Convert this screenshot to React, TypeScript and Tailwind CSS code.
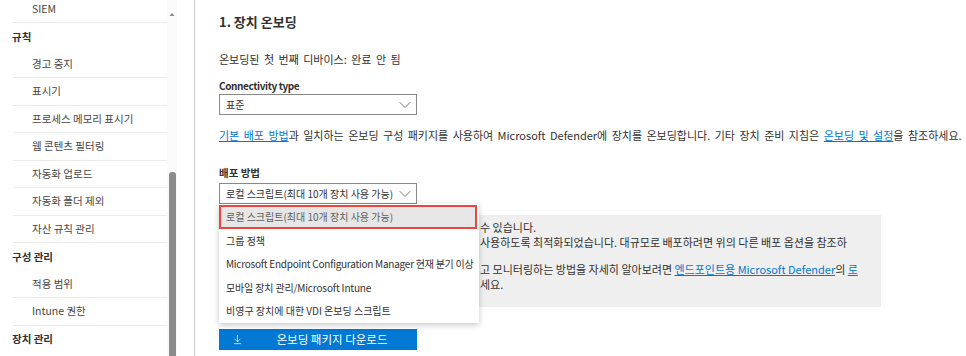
import { ChevronDown, ArrowDownToLine } from 'lucide-react';

type NavRow = { label: string; head?: boolean };

const navRows: NavRow[] = [
  { label: 'SIEM' },
  { label: '규칙', head: true },
  { label: '경고 중지' },
  { label: '표시기' },
  { label: '프로세스 메모리 표시기' },
  { label: '웹 콘텐츠 필터링' },
  { label: '자동화 업로드' },
  { label: '자동화 폴더 제외' },
  { label: '자산 규칙 관리' },
  { label: '구성 관리', head: true },
  { label: '적용 범위' },
  { label: 'Intune 권한' },
  { label: '장치 관리', head: true },
];

// tight: Latin-heavy labels set a little narrower, as in the reference
const methods = [
  { label: '로컬 스크립트(최대 10개 장치 사용 가능)', tight: '' },
  { label: '그룹 정책', tight: '' },
  { label: 'Microsoft Endpoint Configuration Manager 현재 분기 이상', tight: 'tracking-[-0.25px]' },
  { label: '모바일 장치 관리/Microsoft Intune', tight: 'tracking-[-0.15px]' },
  { label: '비영구 장치에 대한 VDI 온보딩 스크립트', tight: '' },
];

function Sidebar() {
  return (
    <div className="flex w-[194px] shrink-0 h-full">
      <div className="w-[167px] mt-[-4.5px]">
        {navRows.map(row =>
          row.head ? (
            <div key={row.label} className="h-[27.5px] flex items-center pl-[12px] text-[10.5px] font-bold text-[#323130]">
              {row.label}
            </div>
          ) : (
            <div
              key={row.label}
              className="h-[27.5px] flex items-center ml-[13px] pl-[19px] border-b border-[#ececec] text-[10.5px] text-[#484644]"
            >
              {row.label}
            </div>
          )
        )}
      </div>
      {/* scrollbar */}
      <div className="w-[10px] bg-[#fbfbfb] flex flex-col">
        <svg width="10" height="6" viewBox="0 0 10 6" className="mt-[11px]">
          <path d="M2.5 5 L5 2 L7.5 5 Z" fill="#8a8a8a" />
        </svg>
        <div className="flex-1" />
        <div className="ml-[2px] w-[7px] h-[184px] bg-[#8c8c8c] rounded-t-[3px]" />
      </div>
    </div>
  );
}

function Select({ value }: { value: string }) {
  return (
    <div className="w-[198px] h-[21px] border border-[#8a8886] bg-white flex items-center pl-[6px] pr-[3px] [word-spacing:0px]">
      <span className="flex-1 min-w-0 text-[10px] text-[#323130] whitespace-nowrap">{value}</span>
      <ChevronDown size={20} strokeWidth={1} className="shrink-0 text-[#605e5c] -mr-[2px]" />
    </div>
  );
}

export default function App() {
  return (
    <div className="flex w-[966px] h-[356px] overflow-hidden bg-white font-['Noto_Sans_CJK_KR',sans-serif] text-[#323130]">
      <Sidebar />

      <div className="flex-1 border-l border-[#d2d2d2] pl-[24px] pt-[13px] overflow-hidden [word-spacing:2px]">
        <h2 className="text-[13px] leading-[18px] font-semibold [word-spacing:0px]">1. 장치 온보딩</h2>

        <p className="mt-[20px] text-[11px] leading-[16px]">온보딩된 첫 번째 디바이스: 완료 안 됨</p>

        <div className="mt-[11px] text-[10px] leading-[16px] font-semibold tracking-[-0.4px] [word-spacing:0px]">
          Connectivity type
        </div>
        <Select value="표준" />

        <p className="mt-[12px] text-[11px] leading-[16px] whitespace-nowrap">
          <span className="text-[#0078d4] underline">기본 배포 방법</span>과 일치하는 온보딩 구성 패키지를 사용하여 Microsoft Defender에 장치를 온보딩합니다. 기타 장치 준비 지침은{' '}
          <span className="text-[#0078d4] underline">온보딩 및 설정</span>을 참조하세요.
        </p>

        <div className="mt-[22px] text-[10.5px] leading-[16px] font-semibold [word-spacing:0px]">배포 방법</div>
        <div className="relative mt-[2px] w-[198px]">
          <Select value="로컬 스크립트(최대 10개 장치 사용 가능)" />

          {/* open dropdown */}
          <div className="absolute left-0 top-full z-10 w-[260px] bg-white pt-[1px] shadow-[0_2px_6px_rgba(0,0,0,0.22)] [word-spacing:0px]">
            {methods.map((m, i) => (
              <div
                key={m.label}
                className={`h-[23.5px] flex items-center pl-[5px] border-2 whitespace-nowrap text-[10px] ${m.tight} ${
                  i === 0 ? 'mr-[2px] border-[#e8473f] bg-[#e6e6e6] text-[#605e5c]' : 'border-transparent text-[#323130]'
                }`}
              >
                {m.label}
              </div>
            ))}
          </div>
        </div>

        {/* info box, partly hidden by the dropdown */}
        <div className="mt-[11px] w-[662px] h-[92px] bg-[#efefef] flex pt-[5px] text-[11px] leading-[14.5px] whitespace-nowrap [word-spacing:0px]">
          <div className="w-[261px] shrink-0" />
          <div>
            <p>수 있습니다.</p>
            <p>사용하도록 최적화되었습니다. 대규모로 배포하려면 위의 다른 배포 옵션을 참조하</p>
            <p className="mt-[13px]">
              고 모니터링하는 방법을 자세히 알아보려면{' '}
              <span className="text-[#0078d4] underline">엔드포인트용 Microsoft Defender</span>의{' '}
              <span className="text-[#0078d4] underline">로</span>
            </p>
            <p>세요.</p>
          </div>
        </div>

        <button className="mt-[22px] w-[198px] h-[21px] bg-[#0078d4] text-white flex items-center pl-[13px]">
          <ArrowDownToLine size={11} strokeWidth={1.5} />
          <span className="flex-1 text-center pl-[4px] text-[11.5px]">온보딩 패키지 다운로드</span>
        </button>
      </div>
    </div>
  );
}
